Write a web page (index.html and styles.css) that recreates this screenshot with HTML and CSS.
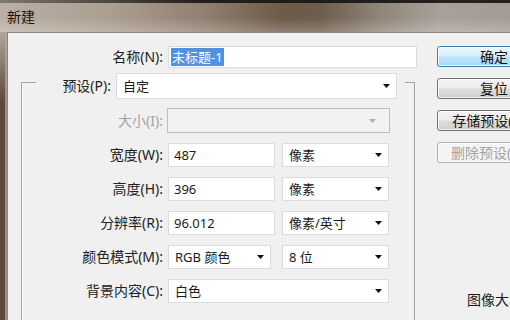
FILE: index.html
```html
<!DOCTYPE html>
<html lang="zh-CN">
<head>
<meta charset="utf-8">
<title>新建</title>
<link rel="stylesheet" href="styles.css">
</head>
<body>
<div class="window">
  <div class="titlebar">新建</div>
  <div class="frame">
    <div class="client">
      <div class="main">
        <div class="name-row">
          <span class="lbl">名称(N):</span>
          <div class="field name"><span class="sel">未标题-1</span></div>
        </div>
        <fieldset class="group">
          <legend class="preset">
            <div class="preset-in">
              <span class="lbl preset-lbl">预设(P):</span>
              <div class="field select preset-sel"><span>自定</span><svg class="arrow" width="7" height="4" viewBox="0 0 7 4"><polygon points="0,0 7,0 3.5,4"/></svg></div>
            </div>
          </legend>
          <div class="rows">
            <span class="lbl dis">大小(I):</span>
            <div class="field select disabled size"><span></span><svg class="arrow" width="7" height="4" viewBox="0 0 7 4"><polygon points="0,0 7,0 3.5,4"/></svg></div>

            <span class="lbl">宽度(W):</span>
            <div class="pair">
              <div class="field num">487</div>
              <div class="field select unit"><span>像素</span><svg class="arrow" width="7" height="4" viewBox="0 0 7 4"><polygon points="0,0 7,0 3.5,4"/></svg></div>
            </div>

            <span class="lbl">高度(H):</span>
            <div class="pair">
              <div class="field num">396</div>
              <div class="field select unit"><span>像素</span><svg class="arrow" width="7" height="4" viewBox="0 0 7 4"><polygon points="0,0 7,0 3.5,4"/></svg></div>
            </div>

            <span class="lbl">分辨率(R):</span>
            <div class="pair">
              <div class="field num">96.012</div>
              <div class="field select unit"><span>像素/英寸</span><svg class="arrow" width="7" height="4" viewBox="0 0 7 4"><polygon points="0,0 7,0 3.5,4"/></svg></div>
            </div>

            <span class="lbl">颜色模式(M):</span>
            <div class="pair">
              <div class="field select mode"><span>RGB 颜色</span><svg class="arrow" width="7" height="4" viewBox="0 0 7 4"><polygon points="0,0 7,0 3.5,4"/></svg></div>
              <div class="field select unit"><span>8 位</span><svg class="arrow" width="7" height="4" viewBox="0 0 7 4"><polygon points="0,0 7,0 3.5,4"/></svg></div>
            </div>

            <span class="lbl">背景内容(C):</span>
            <div class="field select bg"><span>白色</span><svg class="arrow" width="7" height="4" viewBox="0 0 7 4"><polygon points="0,0 7,0 3.5,4"/></svg></div>
          </div>
        </fieldset>
      </div>
      <div class="side">
        <div class="btn default">确定</div>
        <div class="btn">复位</div>
        <div class="btn">存储预设(S)...</div>
        <div class="btn off">删除预设(D)...</div>
        <div class="info">图像大小:</div>
      </div>
    </div>
  </div>
</div>
</body>
</html>
```
FILE: styles.css
```css
* { box-sizing: border-box; }
html, body { margin: 0; padding: 0; }
body {
  width: 510px;
  height: 320px;
  overflow: hidden;
  font-family: "Noto Sans", "Noto Sans CJK SC", sans-serif;
  font-size: 13px;
  line-height: 16px;
  color: #1b1b1b;
  background: #6a5a4a;
}
.window {
  width: 510px;
  height: 320px;
  display: flex;
  flex-direction: column;
  overflow: hidden;
}
.titlebar {
  height: 32px;
  flex: none;
  display: flex;
  align-items: center;
  padding: 2px 0 0 7px;
  font-size: 14px;
  color: #171412;
  background:
    linear-gradient(90deg, rgba(24,21,19,0.35) 0, rgba(24,21,19,0.9) 40%, rgba(24,21,19,0.92) 100%) top / 100% 3px no-repeat,
    linear-gradient(180deg, rgba(255,255,255,0) 55%, rgba(255,255,255,0.22) 100%),
    linear-gradient(90deg, #bab0a5 0%, #ab9e91 22%, #918070 40%, #6e5b48 55%, #6d5d4c 63%, #8f8478 74%, #a8a099 86%, #a39b93 100%);
}
.frame {
  flex: 1;
  min-height: 0;
  display: flex;
  padding-left: 7px;
  background:
    linear-gradient(180deg, rgba(176,166,156,1) 0, rgba(176,166,156,0) 70px),
    linear-gradient(90deg, #5b4a3c 0 5px, #9e9288 5px 7px);
}
.client {
  flex: 1;
  min-width: 0;
  display: flex;
  padding-top: 13px;
  background: #f0f0f0;
  border-left: 1px solid #8c8580;
  border-top: 1px solid #8c8580;
  overflow: hidden;
}
.main { width: 429px; flex: none; }
.lbl { text-align: right; white-space: nowrap; font-size: 14px; color: #222; }
.lbl.dis { color: #a3a3a3; }

.name-row {
  display: grid;
  grid-template-columns: 155px 249px;
  column-gap: 5px;
  align-items: center;
}
.field {
  height: 24px;
  background: #fff;
  border: 1px solid #dcdcdc;
  display: flex;
  align-items: center;
  padding-left: 5px;
  white-space: nowrap;
}
.field.name { height: 22px; padding-left: 2px; }
.sel {
  display: inline-block;
  line-height: 18px;
  padding: 0 1px;
  background: #4d93e2;
  color: #fff;
}
.select { padding-left: 6px; padding-right: 6px; }
.select span { flex: 1; }
.arrow { flex: none; fill: #111; }
.select.disabled { background: #f2f2f2; border-color: #bdbdbd; height: 25px; }
.select.disabled .arrow { fill: #b0b0b0; margin-right: 7px; }

.group {
  margin: 5px 0 0 13px;
  width: 394px;
  padding: 17px 0 40px 0;
  border: 1px solid #a3a3a3;
  box-shadow: inset 1px 0 0 #ffffff;
  min-inline-size: 0;
}
.preset {
  margin-left: 14px;
  padding: 0 8px 0 0;
  height: 18px;
  width: 369px;
}
.preset-in {
  display: flex;
  align-items: center;
  column-gap: 5px;
  height: 26px;
}
.preset-lbl { width: 75px; flex: none; }
.preset-sel { width: 281px; height: 26px; flex: none; }

.rows {
  display: grid;
  grid-template-columns: 141px 221px;
  column-gap: 5px;
  row-gap: 10px;
  align-items: center;
}
.pair { display: flex; justify-content: space-between; }
.num { width: 107px; }
.unit { width: 107px; }
.mode { width: 103px; }
.size { width: 223px; margin-left: -1px; }
.bg { width: 221px; }

.side {
  width: 114px;
  flex: none;
  display: flex;
  flex-direction: column;
  gap: 11px;
}
.btn {
  height: 21px;
  border: 1px solid #707070;
  border-radius: 3px;
  background: linear-gradient(180deg, #f3f3f3 0%, #ebebeb 48%, #dddddd 52%, #cfcfcf 100%);
  box-shadow: inset 0 0 0 1px rgba(255,255,255,0.75);
  display: flex;
  align-items: center;
  justify-content: center;
  white-space: nowrap;
  color: #151515;
  font-size: 14px;
}
.btn.default {
  border-color: #3c7fb1;
  background: linear-gradient(180deg, #eaf6fd 0%, #d9f0fc 48%, #bee6fd 52%, #a7d9f5 100%);
}
.btn.off {
  border-color: #adb2b5;
  background: #f4f4f4;
  color: #a3a3a3;
}
.info {
  margin-top: 118px;
  padding-left: 30px;
  white-space: nowrap;
  font-size: 14px;
}
```
